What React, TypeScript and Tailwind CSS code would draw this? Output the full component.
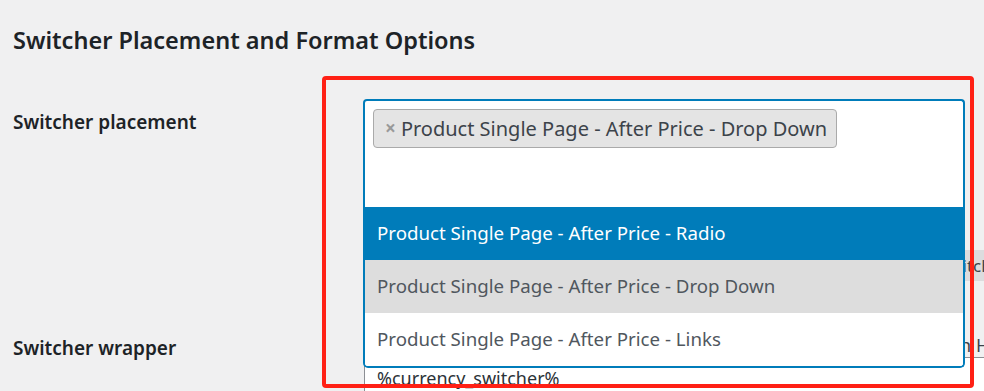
const options = [
  { label: 'Product Single Page - After Price - Radio', state: 'active' },
  { label: 'Product Single Page - After Price - Drop Down', state: 'selected' },
  { label: 'Product Single Page - After Price - Links', state: 'idle' },
]

function PlacementSelect() {
  return (
    <div className="relative w-[602px]">
      <div className="h-[108px] rounded-t-[4px] border-2 border-b-0 border-[#007cba] bg-white pl-[8px] pt-[8px]">
        <span className="inline-flex h-[39px] items-center gap-[5px] rounded-[4px] border border-[#aaa] bg-[#e4e4e4] pl-[11px] pr-[9px] text-[20px] text-[#3c434a]">
          <span className="text-[19px] font-bold text-[#999]">×</span>
          Product Single Page - After Price - Drop Down
        </span>
      </div>
      {/* open dropdown list */}
      <ul className="absolute left-0 top-full z-10 w-full overflow-hidden rounded-b-[5px] border-2 border-t-0 border-[#007cba] bg-white">
        {options.map((o) => (
          <li
            key={o.label}
            className={
              o.state === 'active'
                ? 'flex h-[53px] items-center bg-[#007cba] px-[12px] text-[18.7px] text-white'
                : o.state === 'selected'
                  ? 'flex h-[53px] items-center bg-[#dddddd] px-[12px] text-[18.7px] text-[#50575e]'
                  : 'flex h-[53px] items-center bg-white px-[12px] text-[18.7px] text-[#50575e]'
            }
          >
            {o.label}
          </li>
        ))}
      </ul>
    </div>
  )
}

export default function App() {
  return (
    <div className="relative h-[391px] w-[984px] overflow-hidden bg-[#f0f0f1] font-['Noto_Sans',sans-serif] text-[#1d2327]">
      <div className="pl-[13px] pt-[25px]">
        <h2 className="text-[23.5px] font-semibold leading-[30px]">
          Switcher Placement and Format Options
        </h2>

        <div className="mt-[44px] flex">
          <div className="w-[350px] shrink-0 pt-[11px] text-[19px] font-semibold leading-[24px]">
            Switcher placement
          </div>
          <div className="shrink-0">
            <PlacementSelect />
            <div className="mt-[43px] flex h-[31px] w-[655px] items-center justify-end whitespace-nowrap bg-[#dcdcde] px-[4px] text-[17px] text-[#3c434a]">
              [woocs_currency_switcher]
            </div>
          </div>
        </div>

        <div className="mt-[52px] flex">
          <div className="w-[350px] shrink-0 pt-[3px] text-[19px] font-semibold leading-[24px]">
            Switcher wrapper
          </div>
          <div className="shrink-0">
            <div className="flex h-[24px] w-[662px] justify-end whitespace-nowrap text-[18px] leading-[24px] text-[#3c434a]">
              Wrap the switcher in HTML
            </div>
            <div className="ml-px h-[60px] w-[640px] rounded-[4px] border border-[#8c8f94] bg-white pl-[12px] pt-[8px] text-[18px] leading-[24px] text-[#2c3338]">
              %currency_switcher%
            </div>
          </div>
        </div>
      </div>

      {/* red annotation frame */}
      <div className="pointer-events-none absolute left-[322px] top-[76px] z-20 h-[312px] w-[652px] rounded-[4px] border-4 border-[#ff2015]" />
    </div>
  )
}
